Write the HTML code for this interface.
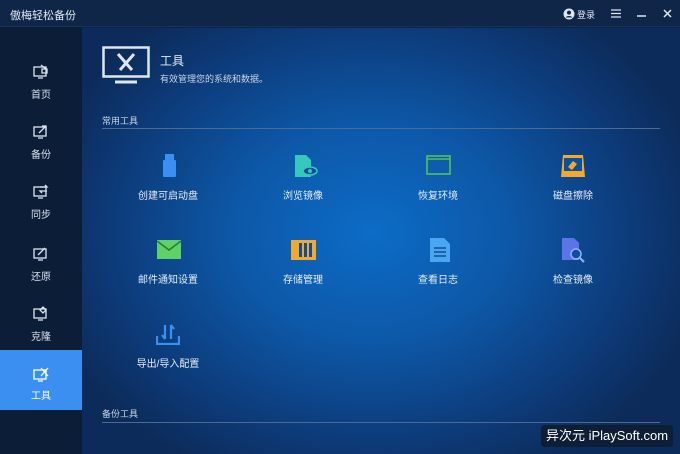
<!DOCTYPE html>
<html><head><meta charset="utf-8"><style>
*{margin:0;padding:0;box-sizing:border-box}
body{width:680px;height:454px;overflow:hidden;font-family:"Liberation Sans","Noto Sans CJK SC",sans-serif;color:#dfe8f5;position:relative;background:#0c2448}
.top{position:absolute;left:0;top:0;width:680px;height:27px;background:#0f2648;border-bottom:1px solid #14325c}
.top .t{position:absolute;left:10px;top:7px;font-size:11px;color:#e0e8f4}
.side{position:absolute;left:0;top:27px;width:82px;height:427px;background:#0b1d37}
.main{position:absolute;left:82px;top:28px;width:598px;height:426px;background:radial-gradient(ellipse 340px 270px at 290px 205px,#0c6cc6 0%,#0d58a8 40%,#0d3a78 78%,#0c2b5a 100%)}
.si{position:absolute;left:0;width:82px;height:60px;text-align:center;font-size:10px;color:#d7e1ef}
.si svg{position:absolute;left:33px;top:10px}
.si span{position:absolute;left:0;right:0;top:32px}
.act{background:#3b8ff0;color:#fff}
.act svg{top:17px}
.act span{top:37px}
.lab{position:absolute;font-size:10px;color:#e6edf7;transform:translateX(-50%);white-space:nowrap}
.ic{position:absolute}
.sec{position:absolute;left:102px;font-size:9px;color:#c8d4e6}
.line{position:absolute;left:102px;width:558px;height:1px;background:#4d6a93}
</style></head><body>
<div class="top"><div class="t">傲梅轻松备份</div>
<svg style="position:absolute;left:563px;top:8px" width="12" height="12"><circle cx="6" cy="6" r="5.5" fill="#dfe6f0"/><circle cx="6" cy="4.6" r="2" fill="#0f2648"/><path d="M2.5 9.5a4 3 0 0 1 7 0z" fill="#0f2648"/></svg>
<div style="position:absolute;left:577px;top:8px;font-size:9px;color:#dfe6f0">登录</div>
<svg style="position:absolute;left:611px;top:9px" width="10" height="9"><path d="M0 1h10M0 4.5h10M0 8h10" stroke="#dfe6f0" stroke-width="1.3"/></svg>
<svg style="position:absolute;left:637px;top:9px" width="10" height="9"><path d="M0 7h9" stroke="#dfe6f0" stroke-width="1.5"/></svg>
<svg style="position:absolute;left:663px;top:9px" width="9" height="9"><path d="M1 1l7 7M8 1l-7 7" stroke="#dfe6f0" stroke-width="1.5"/></svg>
</div>
<div class="side">
<div class="si" style="top:27px"><svg width="16" height="16" fill="none" stroke="#dfe6f0" stroke-width="1.3"><rect x="1" y="3" width="12" height="9"/><path d="M5 14h5M8 1l5 4M9 5h5v4h-5z"/></svg><span>首页</span></div>
<div class="si" style="top:87px"><svg width="16" height="16" fill="none" stroke="#dfe6f0" stroke-width="1.3"><rect x="1" y="3" width="12" height="9"/><path d="M5 14h5M6 9l6-6M9 2h4v4"/></svg><span>备份</span></div>
<div class="si" style="top:147px"><svg width="16" height="16" fill="none" stroke="#dfe6f0" stroke-width="1.3"><rect x="1" y="3" width="12" height="9"/><path d="M5 14h5M7 3h7l-2-2M14 7H7l2 2"/></svg><span>同步</span></div>
<div class="si" style="top:209px"><svg width="16" height="16" fill="none" stroke="#dfe6f0" stroke-width="1.3"><rect x="1" y="3" width="12" height="9"/><path d="M5 14h5M5 9l7-7"/></svg><span>还原</span></div>
<div class="si" style="top:269px"><svg width="16" height="16" fill="none" stroke="#dfe6f0" stroke-width="1.3"><rect x="1" y="3" width="12" height="9"/><path d="M5 14h5M10 1l3 3-3 3-3-3z"/></svg><span>克隆</span></div>
<div class="si act" style="top:323px;height:60px"><svg width="16" height="16" fill="none" stroke="#fff" stroke-width="1.3"><rect x="1" y="3" width="12" height="9"/><path d="M5 14h5M8 1l7 8M15 1l-7 8"/></svg><span>工具</span></div>
</div>
<div class="main"></div>
<svg class="ic" style="left:102px;top:46px" width="48" height="40" fill="none" stroke="#dfe6f0" stroke-width="2.5"><rect x="1.5" y="1.5" width="45" height="29"/><path d="M13 36h22" stroke-width="3"/><path d="M16 8l14 16M32 8l-14 16" stroke-width="3"/></svg>
<div style="position:absolute;left:160px;top:52px;font-size:12px;color:#e6edf7">工具</div>
<div style="position:absolute;left:160px;top:72px;font-size:9px;color:#c8d4e6">有效管理您的系统和数据。</div>
<div class="sec" style="top:114px">常用工具</div><div class="line" style="top:128px"></div>

<svg class="ic" style="left:161px;top:154px" width="16" height="24"><rect x="2" y="6" width="13" height="17" rx="1" fill="#3a8ff2"/><rect x="4" y="0" width="9" height="6" fill="#3a8ff2"/></svg>
<div class="lab" style="left:168px;top:187px">创建可启动盘</div>
<svg class="ic" style="left:294px;top:154px" width="24" height="24"><path d="M1 1h11l5 5v17H1z" fill="#38c7bc"/><ellipse cx="16" cy="17" rx="7" ry="4" fill="#0d4f9b" stroke="#38c7bc" stroke-width="1.5"/><circle cx="16" cy="17" r="2" fill="#38c7bc"/></svg>
<div class="lab" style="left:303px;top:187px">浏览镜像</div>
<svg class="ic" style="left:426px;top:155px" width="25" height="20"><rect x="1" y="1" width="23" height="18" fill="none" stroke="#4fc35b" stroke-width="1.6"/><path d="M1 4h23" stroke="#4fc35b" stroke-width="1.5"/></svg>
<div class="lab" style="left:438px;top:187px">恢复环境</div>
<svg class="ic" style="left:560px;top:154px" width="26" height="24"><path d="M3 1h20l2 22H1z" fill="#f2a92e"/><rect x="4" y="4" width="18" height="13" fill="#0d4f9b"/><path d="M8 13l5-6 4 3-5 6z" fill="#f2a92e"/></svg>
<div class="lab" style="left:573px;top:187px">磁盘擦除</div>

<svg class="ic" style="left:157px;top:240px" width="24" height="19"><rect x="0" y="0" width="24" height="19" fill="#5ed266"/><path d="M0 1l12 9 12-9" fill="none" stroke="#2b7a3a" stroke-width="1.5"/></svg>
<div class="lab" style="left:168px;top:271px">邮件通知设置</div>
<svg class="ic" style="left:291px;top:240px" width="25" height="20"><rect x="0" y="0" width="25" height="20" fill="#f2a92e"/><rect x="8" y="3" width="3" height="14" fill="#0d4f9b"/><rect x="13" y="3" width="3" height="14" fill="#0d4f9b"/><rect x="18" y="3" width="3" height="14" fill="#0d4f9b"/></svg>
<div class="lab" style="left:303px;top:271px">存储管理</div>
<svg class="ic" style="left:430px;top:238px" width="20" height="24"><path d="M0 0h14l6 6v18H0z" fill="#4aa6f0"/><path d="M4 10h12M4 14h12M4 18h12" stroke="#0d4f9b" stroke-width="1.5"/></svg>
<div class="lab" style="left:438px;top:271px">查看日志</div>
<svg class="ic" style="left:562px;top:238px" width="24" height="26"><path d="M0 0h12l5 5v17H0z" fill="#5b74e8"/><circle cx="14" cy="16" r="5" fill="#0d4f9b" stroke="#8fb2ff" stroke-width="1.5"/><path d="M18 20l4 4" stroke="#8fb2ff" stroke-width="2"/></svg>
<div class="lab" style="left:573px;top:271px">检查镜像</div>

<svg class="ic" style="left:156px;top:323px" width="24" height="22" fill="none" stroke="#3a8ff2" stroke-width="2.2"><path d="M9 2v14M6 12l3 4M15 16V2M18 6l-3-4M1 13v8h22v-8"/></svg>
<div class="lab" style="left:168px;top:355px">导出/导入配置</div>

<div class="sec" style="top:407px">备份工具</div><div class="line" style="top:422px"></div>
<div style="position:absolute;left:541px;top:425px;width:132px;height:22px;background:#0e1e36;border-radius:3px;color:#fff;font-size:13px;line-height:22px;text-align:center">异次元 iPlaySoft.com</div>
</body></html>
